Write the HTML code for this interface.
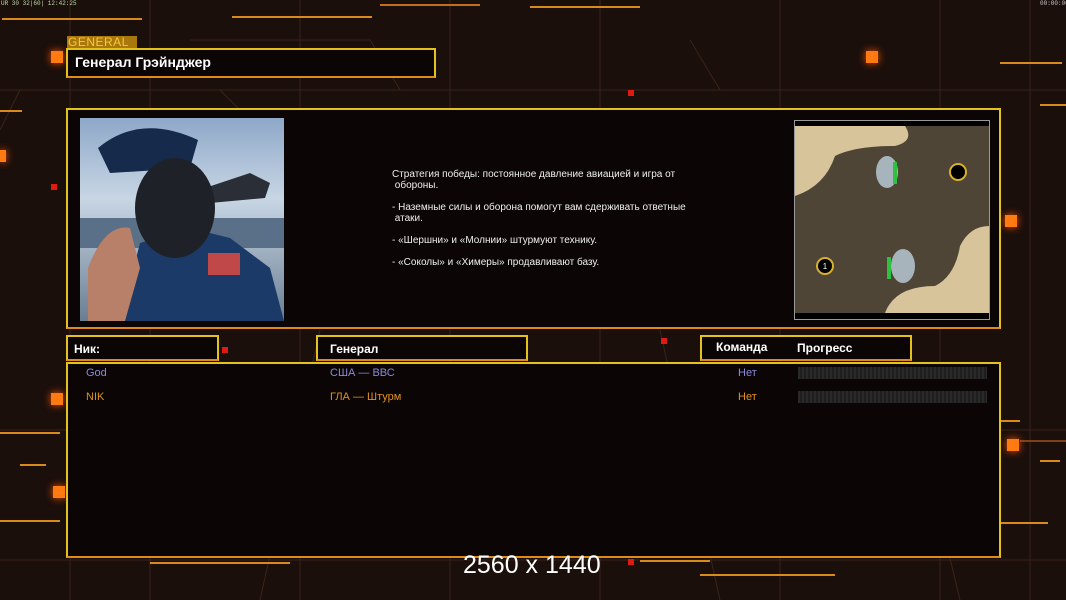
<!DOCTYPE html>
<html><head><meta charset="utf-8"><style>
*{margin:0;padding:0;box-sizing:border-box}
body{width:1066px;height:600px;overflow:hidden;background:#1b0f0b;font-family:"Liberation Sans",sans-serif;position:relative;color:#fff}
.a{position:absolute}
.box{position:absolute;border:2px solid #e4c21c;background:#0b0605;border-bottom-color:#e08a1c}
.ln{position:absolute;height:2px;background:#d88a1a}
.sq{position:absolute;background:#ff7a10;box-shadow:0 0 8px #ff5500}
.rs{position:absolute;background:#e01a10}
.hd{font-size:12px;font-weight:bold;color:#fff}
.desc{font-size:10px;line-height:11px;color:#eee}
.bar{position:absolute;height:12px;background:repeating-linear-gradient(90deg,#2a2a2a 0 2px,#1e1e1e 2px 4px)}
</style></head><body>
<svg class="a" style="left:0;top:0" width="1066" height="600">
<g stroke="#3a2318" stroke-width="1" fill="none">
<line x1="70" y1="0" x2="70" y2="600"/><line x1="150" y1="0" x2="150" y2="600"/><line x1="300" y1="0" x2="300" y2="600"/><line x1="450" y1="0" x2="450" y2="600"/><line x1="600" y1="0" x2="600" y2="600"/><line x1="780" y1="0" x2="780" y2="600"/><line x1="940" y1="0" x2="940" y2="600"/><line x1="1030" y1="0" x2="1030" y2="600"/>
<line x1="0" y1="90" x2="1066" y2="90"/><line x1="0" y1="430" x2="1066" y2="430"/><line x1="0" y1="560" x2="1066" y2="560"/>
<polyline points="0,130 20,90 220,90 260,130"/><polyline points="690,40 720,90 900,90"/><polyline points="190,40 370,40 400,90"/>
<line x1="320" y1="330" x2="260" y2="600"/><line x1="660" y1="330" x2="720" y2="600"/><line x1="900" y1="350" x2="960" y2="600"/>
<polyline points="200,470 230,430 430,430 460,470"/><polyline points="620,470 650,430 850,430 880,470"/>
</g></svg>
<div class="ln" style="left:2px;top:18px;width:140px"></div>
<div class="ln" style="left:232px;top:16px;width:140px"></div>
<div class="ln" style="left:530px;top:6px;width:110px"></div>
<div class="ln" style="left:380px;top:4px;width:100px;background:#c07018"></div>
<div class="ln" style="left:1000px;top:62px;width:62px"></div>
<div class="ln" style="left:1040px;top:104px;width:26px"></div>
<div class="ln" style="left:0;top:110px;width:22px"></div>
<div class="ln" style="left:0;top:432px;width:60px"></div>
<div class="ln" style="left:20px;top:464px;width:26px"></div>
<div class="ln" style="left:0;top:520px;width:60px"></div>
<div class="ln" style="left:150px;top:562px;width:140px"></div>
<div class="ln" style="left:640px;top:560px;width:70px"></div>
<div class="ln" style="left:700px;top:574px;width:135px"></div>
<div class="ln" style="left:1000px;top:522px;width:48px"></div>
<div class="ln" style="left:1040px;top:460px;width:20px"></div>
<div class="ln" style="left:980px;top:420px;width:40px"></div>
<div class="ln" style="left:1020px;top:440px;width:46px;background:#804018"></div>
<div class="sq" style="left:51px;top:51px;width:12px;height:12px"></div>
<div class="sq" style="left:866px;top:51px;width:12px;height:12px"></div>
<div class="sq" style="left:1005px;top:215px;width:12px;height:12px"></div>
<div class="sq" style="left:51px;top:393px;width:12px;height:12px"></div>
<div class="sq" style="left:1007px;top:439px;width:12px;height:12px"></div>
<div class="sq" style="left:53px;top:486px;width:12px;height:12px"></div>
<div class="sq" style="left:0px;top:150px;width:6px;height:12px"></div>
<div class="rs" style="left:628px;top:90px;width:6px;height:6px"></div>
<div class="rs" style="left:51px;top:184px;width:6px;height:6px"></div>
<div class="rs" style="left:222px;top:347px;width:6px;height:6px"></div>
<div class="rs" style="left:661px;top:338px;width:6px;height:6px"></div>
<div class="rs" style="left:628px;top:559px;width:6px;height:6px"></div>
<div class="a" style="left:1px;top:0;font-size:6px;color:#bda;font-family:'Liberation Mono',monospace">UR 30 32|60| 12:42:25</div>
<div class="a" style="left:1040px;top:0;font-size:6px;color:#ccc;font-family:'Liberation Mono',monospace">00:00:00</div>
<div class="a" style="left:67px;top:36px;width:70px;height:12px;background:#a8780c;color:#f8c838;font-size:12px;line-height:12px;padding-left:1px;letter-spacing:0.5px">GENERAL</div>
<div class="box" style="left:66px;top:48px;width:370px;height:30px"></div>
<div class="a" style="left:75px;top:54px;font-size:14px;font-weight:bold">Генерал Грэйнджер</div>
<div class="box" style="left:66px;top:108px;width:935px;height:221px"></div>
<svg class="a" style="left:80px;top:118px" width="204" height="203">
<defs><linearGradient id="sk" x1="0" y1="0" x2="0" y2="1"><stop offset="0" stop-color="#8ea8c8"/><stop offset="0.4" stop-color="#c8d6e4"/><stop offset="1" stop-color="#6a7e92"/></linearGradient></defs>
<rect width="204" height="203" fill="url(#sk)"/>
<rect y="100" width="204" height="30" fill="#5a7088"/>
<path d="M125 70 L170 55 L190 65 L185 80 L130 85Z" fill="#2a2e36"/>
<path d="M40 203 L60 125 L110 110 L150 120 L190 150 L204 203Z" fill="#1c3a68"/>
<path d="M18 30 Q60 -5 118 22 L110 50 L30 55Z" fill="#162a4c"/>
<ellipse cx="95" cy="90" rx="40" ry="50" fill="#1e2228"/>
<path d="M8 150 Q25 105 50 110 L60 150 L45 203 L8 203Z" fill="#b88068"/>
<rect x="128" y="135" width="32" height="22" fill="#c04848"/>
<rect x="0" y="203" width="0" height="0"/>
</svg>
<div class="a desc" style="left:392px;top:169px;width:330px">Стратегия победы: постоянное давление авиацией и игра от<br>&nbsp;обороны.<br><br>- Наземные силы и оборона помогут вам сдерживать ответные<br>&nbsp;атаки.<br><br>- «Шершни» и «Молнии» штурмуют технику.<br><br>- «Соколы» и «Химеры» продавливают базу.</div>
<div class="a" style="left:794px;top:120px;width:196px;height:200px;background:#000;border:1px solid #999"></div>
<svg class="a" style="left:795px;top:126px" width="194" height="187">
<rect width="194" height="187" fill="#4e4536"/>
<path d="M0 0 L110 0 Q120 15 100 20 Q60 20 40 30 Q30 60 0 70Z" fill="#d8c49a"/>
<path d="M194 100 L194 187 L90 187 Q100 160 140 160 Q160 150 165 120 Q175 100 194 100Z" fill="#d8c49a"/>
<ellipse cx="92" cy="46" rx="11" ry="16" fill="#a8b4bc"/>
<ellipse cx="108" cy="140" rx="12" ry="17" fill="#a8b4bc"/>
<rect x="98" y="36" width="4" height="22" fill="#30c040"/>
<rect x="92" y="131" width="4" height="22" fill="#30c040"/>
<circle cx="163" cy="46" r="8" fill="#000" stroke="#d8b030" stroke-width="2"/>
<circle cx="30" cy="140" r="8" fill="#000" stroke="#d8b030" stroke-width="2"/>
<text x="30" y="143" font-size="8" fill="#fff" text-anchor="middle" font-family="Liberation Sans">1</text>
</svg>
<div class="box" style="left:66px;top:335px;width:153px;height:26px"></div>
<div class="a hd" style="left:74px;top:342px">Ник:</div>
<div class="box" style="left:316px;top:335px;width:212px;height:26px"></div>
<div class="a hd" style="left:330px;top:342px">Генерал</div>
<div class="box" style="left:700px;top:335px;width:212px;height:26px"></div>
<div class="a hd" style="left:716px;top:340px">Команда</div>
<div class="a hd" style="left:797px;top:341px">Прогресс</div>
<div class="box" style="left:66px;top:362px;width:935px;height:196px"></div>
<div class="a" style="left:86px;top:367px;font-size:11px;color:#8a8ad8">God</div>
<div class="a" style="left:330px;top:367px;font-size:11px;color:#8a8ad8">США — ВВС</div>
<div class="a" style="left:738px;top:367px;font-size:11px;color:#8a8ad8">Нет</div>
<div class="bar" style="left:798px;top:367px;width:189px"></div>
<div class="a" style="left:86px;top:391px;font-size:11px;color:#e09020">NIK</div>
<div class="a" style="left:330px;top:391px;font-size:11px;color:#e09020">ГЛА — Штурм</div>
<div class="a" style="left:738px;top:391px;font-size:11px;color:#e09020">Нет</div>
<div class="bar" style="left:798px;top:391px;width:189px"></div>
<div class="a" style="left:463px;top:551px;font-size:25px;color:#fff">2560 x 1440</div>
</body></html>
